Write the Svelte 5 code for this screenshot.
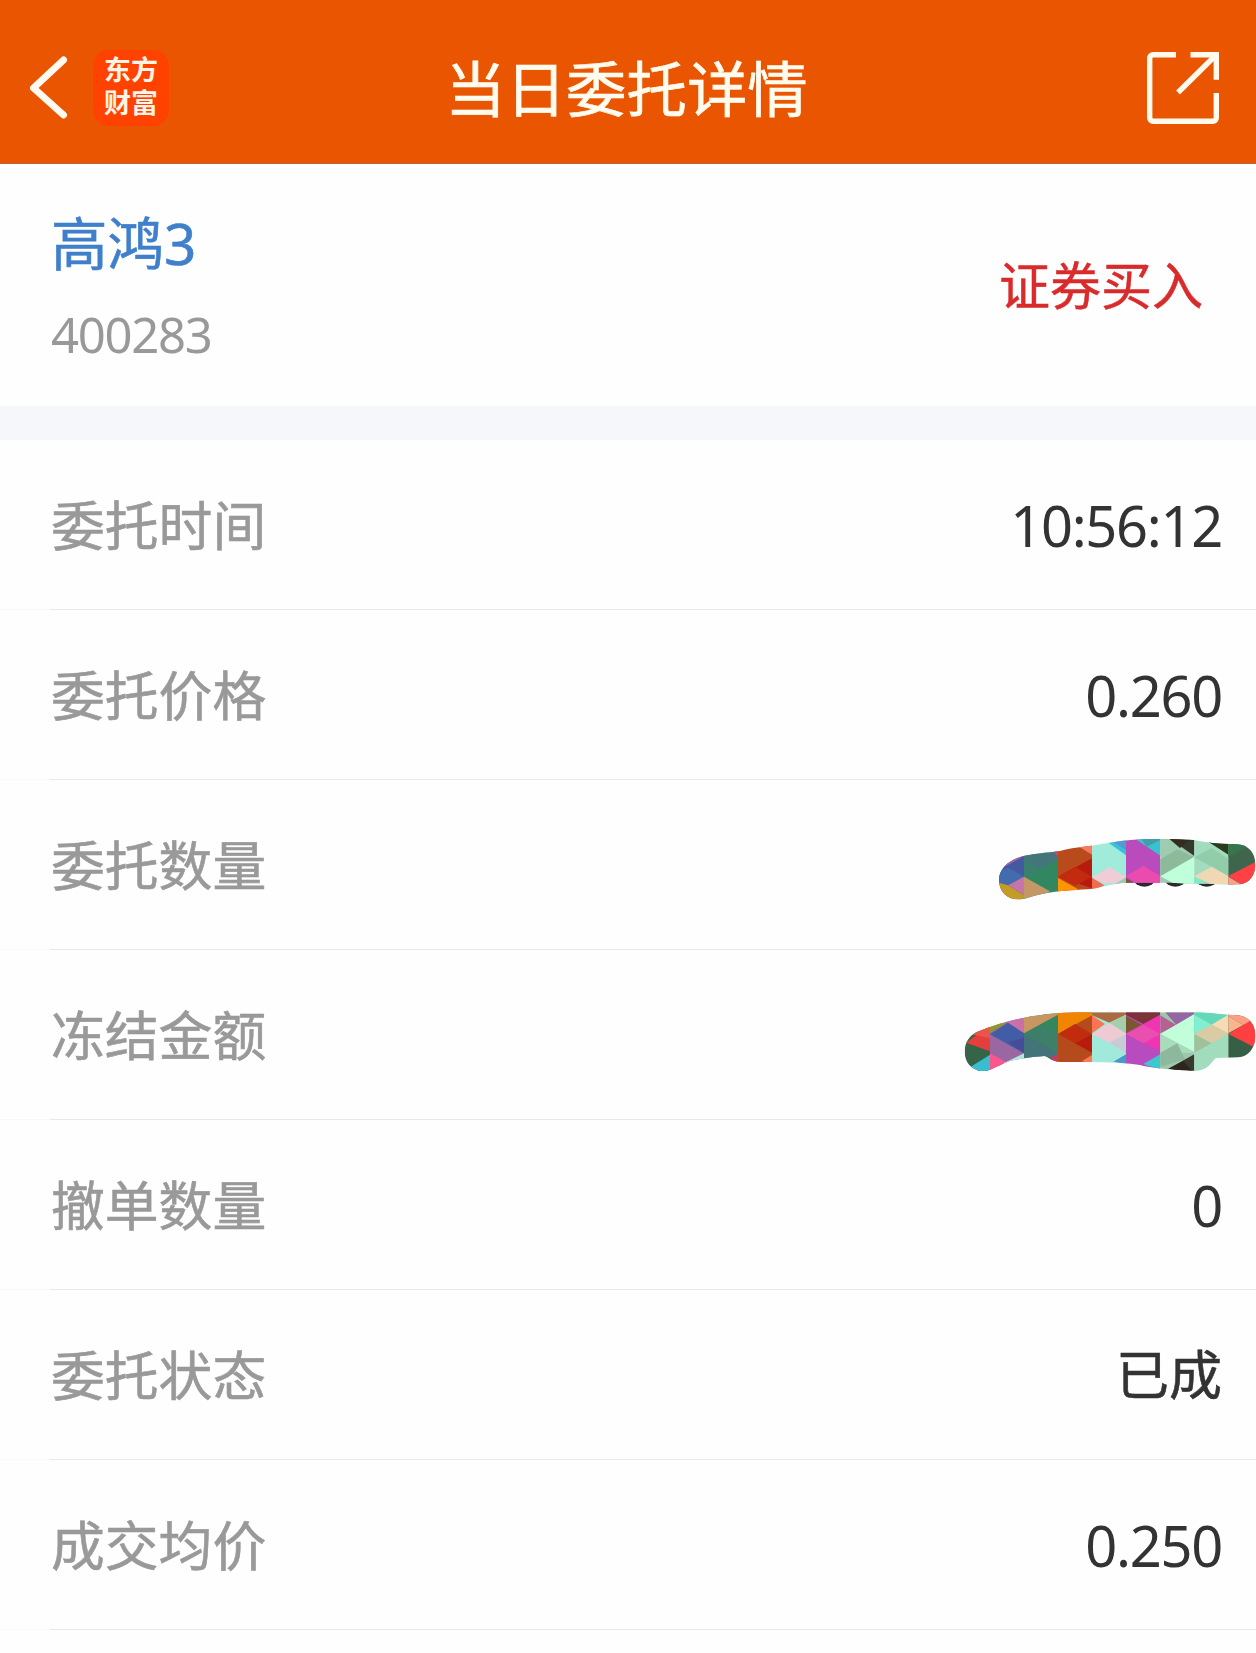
<script>
  const stock = { name: "高鸿3", code: "400283", side: "证券买入" };

  const rows = [
    { label: "委托时间", value: "10:56:12" },
    { label: "委托价格", value: "0.260" },
    { label: "委托数量", mask: "amount" },
    { label: "冻结金额", mask: "frozen" },
    { label: "撤单数量", value: "0" },
    { label: "委托状态", value: "已成", cjk: true },
    { label: "成交均价", value: "0.250" }
  ];

  // mosaic strokes that hide the private numbers
  const masks = {
    amount: {
      outline: "M177 180C177 145 205 120 250 108C300 98 335 98 360 93C400 82 430 80 456 77C500 68 540 63 580 59C640 55 710 58 763 60C800 68 830 71 890 73C925 74 946 98 946 133C946 166 928 190 900 193C850 195 800 190 740 191C690 186 640 190 560 188C520 190 490 200 460 206C410 210 370 211 340 216C300 222 280 228 262 234C215 248 177 225 177 180Z",
      shapes: [
        ["#445aa0", "150,50 252,50 252,260 150,260"],
        ["#a865a5", "150,50 252,50 252,108 150,165"],
        ["#426cae", "150,165 204,143 252,170 204,196 150,180"],
        ["#c675aa", "252,170 252,226 204,196"],
        ["#c49b24", "150,180 204,196 252,226 252,260 150,260"],
        ["#308760", "252,50 354,50 354,260 252,260"],
        ["#437678", "252,70 354,90 354,120 252,172"],
        ["#3b806d", "252,122 302,150 252,176"],
        ["#c49766", "252,170 330,214 252,260"],
        ["#b94a1c", "354,50 456,50 456,260 354,260"],
        ["#e63d6e", "335,90 354,90 354,108"],
        ["#fa7958", "400,70 456,60 456,104"],
        ["#b81a0e", "456,115 456,205 354,170"],
        ["#c22b10", "354,170 405,140 456,170 405,198"],
        ["#ff9500", "354,174 415,208 354,230"],
        ["#a0ebd9", "456,50 558,50 558,230 456,230"],
        ["#39c1dc", "480,50 558,50 558,106"],
        ["#5599d0", "510,60 558,50 558,90"],
        ["#f0cdd6", "456,172 508,142 558,172 558,190 490,190"],
        ["#f06b50", "456,173 493,196 456,215"],
        ["#9bcbad", "558,172 558,200 520,195"],
        ["#b94bbd", "558,50 661,50 661,230 558,230"],
        ["#38c1ce", "575,50 661,50 661,107"],
        ["#439da8", "600,50 661,50 661,60 620,80"],
        ["#eb4aae", "558,168 610,137 661,168 661,190 590,190"],
        ["#795638", "558,174 584,190 558,190"],
        ["#9dccb0", "661,50 763,50 763,230 661,230"],
        ["#8dba9b", "661,118 712,88 763,112 763,116 661,170"],
        ["#33392c", "680,50 763,50 763,108"],
        ["#322b20", "680,50 763,50 720,84"],
        ["#bfffd9", "661,169 763,110 763,200 720,200"],
        ["#a2dcbe", "763,50 865,50 865,230 763,230"],
        ["#91cda9", "763,112 814,84 865,116 865,168"],
        ["#293c1b", "800,62 865,62 865,104"],
        ["#efd8b3", "763,169 815,140 865,169 865,200 820,196"],
        ["#80e9cd", "763,170 805,196 763,196"],
        ["#3f664c", "865,50 948,50 948,230 865,230"],
        ["#38744c", "865,50 948,50 920,80 865,112"],
        ["#ff4145", "948,125 948,200 915,200 865,168"],
        ["#ff9e85", "865,170 908,196 865,200"]
      ],
      dots: [613, 706, 800]
    },
    frozen: {
      outline: "M74 185C74 158 88 132 120 122C180 98 245 82 300 76C340 68 400 67 456 67L763 67C810 67 850 75 895 76C928 80 946 104 946 138C946 174 925 200 895 202L828 204C818 212 814 222 803 230C785 243 765 244 740 241C680 238 625 233 600 225C520 214 450 218 360 216C330 214 326 200 314 198C280 200 220 208 195 218C165 232 148 244 125 243C94 240 74 216 74 185Z",
      shapes: [
        ["#356448", "48,50 150,50 150,260 48,260"],
        ["#e63d3d", "78,158 150,105 150,184"],
        ["#ed5448", "80,130 150,90 150,145"],
        ["#39bed0", "90,232 150,194 150,250 90,250"],
        ["#9968a3", "150,50 252,50 252,260 150,260"],
        ["#8e9a2c", "150,100 200,98 150,128"],
        ["#c96faa", "200,98 252,70 252,130"],
        ["#425da5", "150,133 204,98 252,130 252,190"],
        ["#444e98", "204,158 252,142 252,190"],
        ["#fc568e", "150,190 204,220 150,250"],
        ["#b6e7df", "252,190 252,220 190,220"],
        ["#33865d", "252,50 354,50 354,260 252,260"],
        ["#c79663", "252,60 354,60 354,74 252,130"],
        ["#3e7f68", "252,132 304,104 354,132 354,190"],
        ["#42747a", "252,132 354,190 354,205 252,205"],
        ["#ce3660", "330,204 354,192 354,220"],
        ["#b54b1c", "354,50 456,50 456,260 354,260"],
        ["#ef8500", "354,50 456,50 456,76 354,132"],
        ["#c22c0e", "354,132 405,102 456,132 405,160"],
        ["#b81a0c", "405,160 456,132 456,188"],
        ["#fd7954", "425,214 456,195 456,220"],
        ["#a1eadb", "456,50 558,50 558,260 456,260"],
        ["#aa6b43", "456,50 558,50 558,74 508,98 456,76"],
        ["#fb7453", "456,76 495,102 456,130"],
        ["#a6ceaa", "508,98 558,74 558,130"],
        ["#efcad5", "456,132 508,100 558,132 508,158"],
        ["#c8cbd5", "508,158 558,132 558,188"],
        ["#4799cc", "520,215 558,193 558,222"],
        ["#b84bbd", "558,50 661,50 661,260 558,260"],
        ["#7b3338", "558,50 661,50 661,75 610,102 558,75"],
        ["#7a5731", "558,78 605,104 558,130"],
        ["#f334b2", "558,132 661,74 661,184"],
        ["#ea4eae", "558,132 610,104 661,132 610,160"],
        ["#3bc8d1", "610,222 661,193 661,240"],
        ["#9cc9ae", "661,50 763,50 763,260 661,260"],
        ["#9765a2", "661,50 763,50 763,74 710,106"],
        ["#b36292", "661,76 710,106 661,130"],
        ["#c0ffd9", "661,132 763,72 763,186"],
        ["#a8dcbd", "661,132 712,160 763,188 661,190"],
        ["#8eb89c", "661,188 712,160 735,208 661,230"],
        ["#353a2d", "685,236 763,193 763,250"],
        ["#2d241c", "685,236 730,214 763,250"],
        ["#a1dcbd", "763,50 865,50 865,260 763,260"],
        ["#64d9b9", "763,50 850,50 865,78 763,130"],
        ["#83efd1", "763,75 815,104 763,130"],
        ["#f6dcb6", "815,104 865,74 865,130"],
        ["#dacba5", "763,132 815,104 865,130 815,160"],
        ["#9fc29b", "763,132 815,160 763,188"],
        ["#365f45", "865,50 948,50 948,260 865,260"],
        ["#ffa084", "865,50 948,50 948,90 910,105 865,78"],
        ["#f7b68b", "865,78 910,105 865,130"],
        ["#ff4042", "865,132 948,82 948,174"]
      ],
      dots: []
    }
  };
</script>

<main class="page">
  <header class="topbar">
    <div class="left">
      <svg class="back" viewBox="0 0 40 64" aria-label="返回">
        <path d="M35.5 4 5.5 32l30 27" />
      </svg>
      <div class="logo"><span>东方</span><span>财富</span></div>
    </div>
    <h1>当日委托详情</h1>
    <svg class="share" viewBox="0 0 72 72" aria-label="分享">
      <path d="M29 2.7H6.2a3.5 3.5 0 0 0-3.5 3.5v59.6a3.5 3.5 0 0 0 3.5 3.5h59.6a3.5 3.5 0 0 0 3.5-3.5V41" />
      <path d="M43.5 2.7h25.8v25M69 3 31 40.5" />
    </svg>
  </header>

  <section class="stock">
    <div>
      <div class="name">{stock.name}</div>
      <div class="code">{stock.code}</div>
    </div>
    <div class="side">{stock.side}</div>
  </section>

  <section class="list">
    {#each rows as row}
      <div class="row">
        <span class="label">{row.label}</span>
        {#if row.mask}
          <svg class="mask" viewBox="0 0 948 300">
            <defs>
              <clipPath id={row.mask}><path d={masks[row.mask].outline} /></clipPath>
            </defs>
            {#each masks[row.mask].dots as cx}
              <ellipse {cx} cy="176" rx="33" ry="24" fill="#2b2b2d" />
            {/each}
            <g clip-path="url(#{row.mask})">
              {#each masks[row.mask].shapes as [fill, points]}
                <polygon {points} {fill} />
              {/each}
            </g>
          </svg>
        {:else}
          <span class="value" class:cjk={row.cjk}>{row.value}</span>
        {/if}
      </div>
    {/each}
  </section>
</main>

<style>
  :global(body) {
    background: #fefefe;
  }
  .page {
    height: 1653px;
    overflow: hidden;
    background: #fefefe;
    font-family: "Noto Sans", "Noto Sans CJK SC", sans-serif;
  }
  .topbar {
    display: grid;
    grid-template-columns: 1fr auto 1fr;
    align-items: center;
    height: 164px;
    padding: 12px 37px 0 28px;
    box-sizing: border-box;
    background: #ea5502;
    border-bottom: 1px solid #b3693f;
  }
  .left {
    display: flex;
    align-items: center;
    gap: 25px;
  }
  .back {
    width: 40px;
    height: 64px;
    fill: none;
    stroke: #fffaf0;
    stroke-width: 7;
    stroke-linecap: round;
    stroke-linejoin: round;
  }
  .logo {
    display: flex;
    flex-direction: column;
    justify-content: center;
    align-items: center;
    width: 76px;
    height: 76px;
    border-radius: 16px;
    background: #ff4200;
    color: #fff3e6;
    font-family: "Liberation Sans", "Noto Sans CJK SC", sans-serif;
    font-size: 27px;
    font-weight: 700;
    line-height: 33px;
  }
  h1 {
    margin: -4px -6px 0 0;
    color: #fffbee;
    font-family: "Noto Sans CJK SC", sans-serif;
    font-size: 60.4px;
    font-weight: 400;
    line-height: 80px;
    -webkit-text-stroke: 0.7px #fffbee;
  }
  .share {
    justify-self: end;
    width: 72px;
    height: 72px;
    fill: none;
    stroke: #fffaec;
    stroke-width: 5.4;
  }
  .stock {
    display: flex;
    justify-content: space-between;
    align-items: center;
    height: 242px;
    padding: 0 53px 0 51px;
    box-sizing: border-box;
  }
  .name {
    margin-top: 3px;
    color: #3f7fcb;
    font-size: 56.5px;
    line-height: 80px;
    -webkit-text-stroke: 0.6px #3f7fcb;
  }
  .code {
    margin-top: 14px;
    color: #999;
    font-size: 49px;
    letter-spacing: -1.3px;
    line-height: 72px;
  }
  .side {
    color: #d92b2b;
    font-size: 51px;
    line-height: 70px;
    -webkit-text-stroke: 0.5px #d92b2b;
  }
  .list {
    border-top: 34px solid #f6f7fa;
  }
  .row {
    display: flex;
    justify-content: space-between;
    align-items: center;
    height: 170px;
    padding: 0 34px 0 51px;
    box-sizing: border-box;
    border-bottom: 1px solid;
    border-image: linear-gradient(to right, #f8f8f8 51px, #e9e9e9 51px) 1;
  }
  .label {
    color: #999;
    font-size: 53.8px;
    line-height: 80px;
    -webkit-text-stroke: 0.6px #999;
  }
  .value {
    color: #333;
    font-size: 56px;
    letter-spacing: -1.3px;
    line-height: 80px;
  }
  .value.cjk {
    font-size: 53px;
    letter-spacing: 0;
    -webkit-text-stroke: 0.6px #333;
  }
  .mask {
    width: 316px;
    height: 100px;
    margin: 10px -34px 0 0;
  }
</style>
